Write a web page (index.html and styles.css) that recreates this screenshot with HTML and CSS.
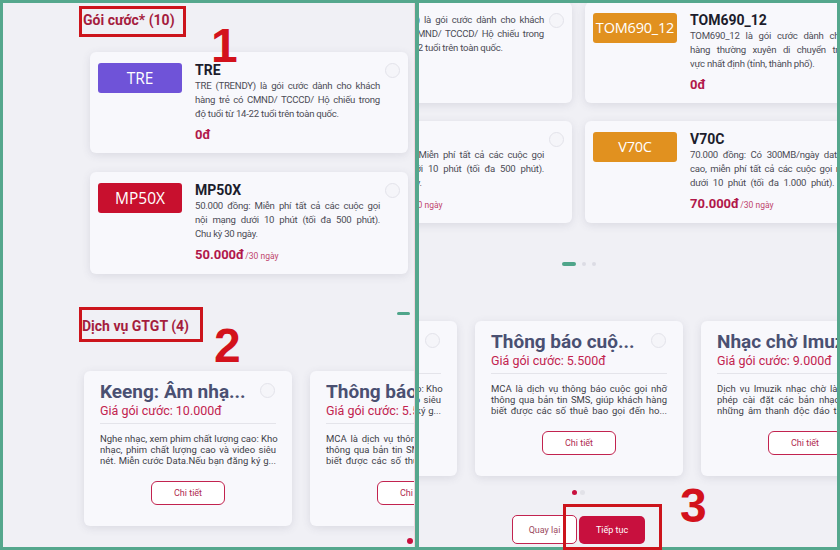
FILE: index.html
```html
<!DOCTYPE html>
<html lang="vi">
<head>
<meta charset="utf-8">
<title>Gói cước</title>
<link rel="stylesheet" href="styles.css">
</head>
<body>
<div class="frame">
  <section class="panel panel-left">
    <h2 class="sec-title t1">Gói cước* (10)</h2>
    <div class="pkg-list">
      <div class="pkg">
        <div class="badge purple">TRE</div>
        <div class="pkg-body">
          <div class="pkg-name">TRE</div>
          <div class="pkg-desc"><span class="j">TRE (TRENDY) là gói cước dành cho khách</span><span class="j">hàng trẻ có CMND/ TCCCD/ Hộ chiếu trong</span><span class="e">độ tuổi từ 14-22 tuổi trên toàn quốc.</span></div>
          <div class="pkg-price">0đ</div>
        </div>
        <span class="radio"></span>
      </div>
      <div class="pkg">
        <div class="badge red">MP50X</div>
        <div class="pkg-body">
          <div class="pkg-name">MP50X</div>
          <div class="pkg-desc"><span class="j">50.000 đồng: Miễn phí tất cả các cuộc gọi</span><span class="j">nội mạng dưới 10 phút (tối đa 500 phút).</span><span class="e">Chu kỳ 30 ngày.</span></div>
          <div class="pkg-price">50.000đ<small>/30 ngày</small></div>
        </div>
        <span class="radio"></span>
      </div>
    </div>
    <div class="dash-row"><span class="dash"></span></div>
    <h2 class="sec-title t2">Dịch vụ GTGT (4)</h2>
    <div class="svc-row left-svc">
      <div class="svc">
        <div class="svc-title">Keeng: Âm nhạ...</div>
        <div class="svc-price">Giá gói cước: 10.000đ</div>
        <div class="svc-sep"></div>
        <div class="svc-desc"><span class="j">Nghe nhạc, xem phim chất lượng cao: Kho</span><span class="j">nhạc, phim chất lượng cao và video siêu</span><span class="j">nét. Miễn cước Data.Nếu bạn đăng ký g...</span></div>
        <button class="svc-btn">Chi tiết</button>
        <span class="radio svc-radio"></span>
      </div>
      <div class="svc">
        <div class="svc-title">Thông báo cuộ...</div>
        <div class="svc-price">Giá gói cước: 5.500đ</div>
        <div class="svc-sep"></div>
        <div class="svc-desc"><span class="j">MCA là dịch vụ thông báo cuộc gọi nhỡ</span><span class="j">thông qua bản tin SMS, giúp khách hàng</span><span class="j">biết được các số thuê bao gọi đến ho...</span></div>
        <button class="svc-btn">Chi tiết</button>
        <span class="radio svc-radio"></span>
      </div>
    </div>
    <div class="dot-row-left"><span class="dot dot-red"></span></div>
  </section>

  <section class="panel panel-right">
    <div class="right-inner">
      <div class="pkg-grid">
        <div class="pkg">
          <div class="badge purple">TRE</div>
          <div class="pkg-body raised">
            <div class="pkg-name">TRE</div>
            <div class="pkg-desc"><span class="j">TRE (TRENDY) là gói cước dành cho khách</span><span class="j">hàng trẻ có CMND/ TCCCD/ Hộ chiếu trong</span><span class="e">độ tuổi từ 14-22 tuổi trên toàn quốc.</span></div>
            <div class="pkg-price">0đ</div>
          </div>
          <span class="radio"></span>
        </div>
        <div class="pkg">
          <div class="badge orange">TOM690_12</div>
          <div class="pkg-body">
            <div class="pkg-name">TOM690_12</div>
            <div class="pkg-desc"><span class="j">TOM690_12 là gói cước dành cho khách</span><span class="j">hàng thường xuyên di chuyển trong khu</span><span class="e">vực nhất định (tỉnh, thành phố).</span></div>
            <div class="pkg-price">0đ</div>
          </div>
          <span class="radio"></span>
        </div>
        <div class="pkg">
          <div class="badge red">MP50X</div>
          <div class="pkg-body">
            <div class="pkg-name">MP50X</div>
            <div class="pkg-desc"><span class="j">50.000 đồng: Miễn phí tất cả các cuộc gọi</span><span class="j">nội mạng dưới 10 phút (tối đa 500 phút).</span><span class="e">Chu kỳ 30 ngày.</span></div>
            <div class="pkg-price">50.000đ<small>/30 ngày</small></div>
          </div>
          <span class="radio"></span>
        </div>
        <div class="pkg">
          <div class="badge orange">V70C</div>
          <div class="pkg-body">
            <div class="pkg-name">V70C</div>
            <div class="pkg-desc"><span class="j">70.000 đồng: Có 300MB/ngày data tốc độ</span><span class="j">cao, miễn phí tất cả các cuộc gọi nội mạng</span><span class="j">dưới 10 phút (tối đa 1.000 phút). Chu kỳ...</span></div>
            <div class="pkg-price">70.000đ<small>/30 ngày</small></div>
          </div>
          <span class="radio"></span>
        </div>
      </div>
      <div class="pager"><span class="dash"></span><span class="pdot"></span><span class="pdot"></span></div>

      <div class="svc-row right-svc">
        <div class="svc">
          <div class="svc-title">Keeng: Âm nhạ...</div>
          <div class="svc-price">Giá gói cước: 10.000đ</div>
          <div class="svc-sep"></div>
          <div class="svc-desc"><span class="j">Nghe nhạc, xem phim chất lượng cao: Kho</span><span class="j">nhạc, phim chất lượng cao và video siêu</span><span class="j">nét. Miễn cước Data.Nếu bạn đăng ký g...</span></div>
          <button class="svc-btn">Chi tiết</button>
          <span class="radio svc-radio"></span>
        </div>
        <div class="svc">
          <div class="svc-title">Thông báo cuộ...</div>
          <div class="svc-price">Giá gói cước: 5.500đ</div>
          <div class="svc-sep"></div>
          <div class="svc-desc"><span class="j">MCA là dịch vụ thông báo cuộc gọi nhỡ</span><span class="j">thông qua bản tin SMS, giúp khách hàng</span><span class="j">biết được các số thuê bao gọi đến ho...</span></div>
          <button class="svc-btn">Chi tiết</button>
          <span class="radio svc-radio"></span>
        </div>
        <div class="svc">
          <div class="svc-title">Nhạc chờ Imuzik</div>
          <div class="svc-price">Giá gói cước: 9.000đ</div>
          <div class="svc-sep"></div>
          <div class="svc-desc"><span class="j">Dịch vụ Imuzik nhạc chờ là dịch vụ cho</span><span class="j">phép cài đặt các bản nhạc, đoạn nhạc</span><span class="j">những âm thanh độc đáo thay cho tiế...</span></div>
          <button class="svc-btn">Chi tiết</button>
          <span class="radio svc-radio"></span>
        </div>
      </div>
      <div class="svc-dots"><span class="dot dot-red"></span><span class="dot dot-gray"></span></div>
      <div class="actions">
        <button class="btn-back">Quay lại</button>
        <button class="btn-next">Tiếp tục</button>
      </div>
    </div>
  </section>

  <div class="mark box1"></div>
  <div class="num n1">1</div>
  <div class="mark box2"></div>
  <div class="num n2">2</div>
  <div class="mark box3"></div>
  <div class="num n3">3</div>
</div>
</body>
</html>
```

FILE: styles.css
```css
* { box-sizing: border-box; margin: 0; padding: 0; }

html, body { margin: 0; width: 840px; height: 550px; overflow: hidden; }
body { font-family: Roboto, "Noto Sans", Arial, sans-serif; }

.frame {
  position: relative;
  width: 840px;
  height: 550px;
  padding: 3px;
  background: #55a78d;
  display: grid;
  grid-template-columns: 412px 418px;
  column-gap: 4px;
}

.panel {
  background: #f0f0f5;
  overflow: hidden;
  position: relative;
}

.panel-left {
  padding-top: 8px;
  border-right: 1px solid #f3d5de;
}

/* section titles */
.sec-title {
  font: 700 14px/17px Roboto, sans-serif;
  color: #a51d3d;
}
.t1 { margin-left: 80px; margin-top: 1px; }
.t2 { margin-left: 79px; margin-top: 3px; }

/* package cards */
.pkg-list {
  margin: 23px 0 0 87px;
  width: 318px;
  display: flex;
  flex-direction: column;
  gap: 19px;
}

.pkg {
  position: relative;
  width: 318px;
  background: #f8f8fc;
  border-radius: 6px;
  box-shadow: 0 2px 8px rgba(70, 70, 100, 0.13);
  padding: 9px 28px 10px 8px;
  display: flex;
  gap: 13px;
}

.badge {
  flex: none;
  width: 84px;
  height: 30px;
  margin-top: 2px;
  border-radius: 3px;
  color: #fff;
  font: 500 15.5px/30px "Open Sans", Roboto, sans-serif;
  text-align: center;
  white-space: nowrap;
  overflow: hidden;
}
.purple { background: #6f53d8; }
.red { background: #c8102e; }
.orange { background: #e1911f; font-size: 14.5px; letter-spacing: -0.2px; }

.pkg-body { flex: 1; min-width: 0; }
.pkg-body.raised { margin-top: -16px; }

.pkg-name {
  font: 700 14px/18px Roboto, sans-serif;
  color: #1c1d2c;
}

.pkg-desc {
  font: 400 9.6px/14px Roboto, sans-serif;
  letter-spacing: -0.25px;
  color: #4c4c56;
}
.pkg-desc span, .svc-desc span { display: block; white-space: nowrap; }
.j { text-align: justify; text-align-last: justify; }
.e { text-align: left; }

.pkg-price {
  margin-top: 6px;
  font: 700 13px/16px Roboto, sans-serif;
  color: #b1174a;
}
.pkg-price small {
  font-weight: 400;
  font-size: 8.5px;
  color: #c0456c;
  margin-left: 1px;
}

.radio {
  position: absolute;
  top: 11px;
  right: 8px;
  width: 15px;
  height: 15px;
  border-radius: 50%;
  background: #f5f5f9;
  border: 1px solid #e3e3ea;
}

/* pager dash */
.dash-row {
  margin: 38px 0 0 394px;
  height: 3px;
  display: flex;
}
.dash {
  display: block;
  width: 13px;
  height: 3px;
  border-radius: 2px;
  background: #4fa58a;
}

/* service cards */
.svc-row {
  display: flex;
  gap: 18px;
}
.left-svc { margin: 36px 0 0 81px; }

.svc {
  position: relative;
  flex: none;
  width: 208px;
  background: #f8f8fc;
  border-radius: 6px;
  box-shadow: 0 2px 8px rgba(70, 70, 100, 0.13);
  padding: 10px 16px 21px;
}

.svc-title {
  font: 700 19px/22px Roboto, sans-serif;
  color: #4a5072;
  white-space: nowrap;
}
.svc-price {
  font: 400 12.5px/16px Roboto, sans-serif;
  color: #c2234f;
  white-space: nowrap;
}
.svc-sep {
  margin-top: 4px;
  height: 1px;
  background: #e4e4ea;
}
.svc-desc {
  margin-top: 9px;
  font: 400 9.5px/11px Roboto, sans-serif;
  color: #3f3f48;
}
.svc-btn {
  display: block;
  margin: 15px auto 0;
  width: 74px;
  height: 24px;
  border: 1px solid #c2234f;
  border-radius: 6px;
  background: #fff;
  font: 400 9px Roboto, sans-serif;
  color: #b02a50;
}
.svc-radio { top: 12px; right: 17px; }

.dot-row-left {
  margin: 12px 0 0 404px;
  display: flex;
}
.dot {
  display: block;
  width: 6px;
  height: 6px;
  border-radius: 50%;
}
.dot-red { background: #c8103e; }
.dot-gray { background: #e2e2e8; }

/* right panel */
.right-inner {
  margin-left: -165px;
  width: 649px;
}

.pkg-grid {
  margin-top: -1px;
  display: grid;
  grid-template-columns: 318px 318px;
  column-gap: 13px;
  row-gap: 18px;
}

.pager {
  margin-top: 39px;
  display: flex;
  justify-content: center;
  align-items: center;
  gap: 6px;
  height: 4px;
}
.pager .dash { width: 14px; height: 4px; }
.pdot {
  display: block;
  width: 4px;
  height: 4px;
  border-radius: 50%;
  background: #dcdce4;
}

.right-svc { margin: 55px 0 0 -5px; }

.svc-dots {
  margin-top: 14px;
  display: flex;
  justify-content: center;
  gap: 3px;
}
.svc-dots .dot { width: 5px; height: 5px; }

.actions {
  margin-top: 20px;
  display: flex;
  justify-content: center;
  align-items: center;
  gap: 2px;
}
.btn-back, .btn-next {
  font: 400 9px Roboto, sans-serif;
  border-radius: 5px;
}
.btn-back {
  width: 65px;
  height: 29px;
  background: #fff;
  border: 1px solid #c2234f;
  color: #9a4a60;
}
.btn-next {
  width: 66px;
  height: 28px;
  background: #c8103e;
  border: none;
  color: #fff;
}

/* annotations */
.mark {
  position: absolute;
  border: 3px solid #cc141c;
}
.box1 { left: 79px; top: 6px; width: 107px; height: 31px; }
.box2 { left: 79px; top: 307px; width: 124px; height: 35px; }
.box3 { left: 563px; top: 504px; width: 99px; height: 46px; }

.num {
  position: absolute;
  font: 700 48px/48px "Liberation Sans", Arial, sans-serif;
  color: #d3121c;
}
.n1 { left: 211px; top: 22px; }
.n2 { left: 214px; top: 322px; }
.n3 { left: 680px; top: 482px; }
```
